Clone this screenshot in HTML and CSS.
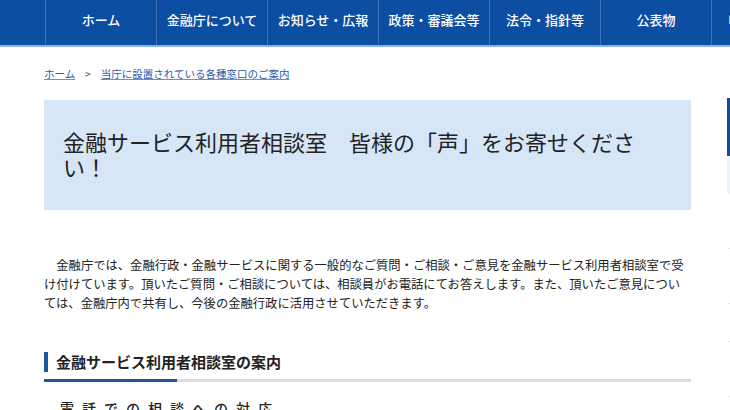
FILE: index.html
```html
<!DOCTYPE html>
<html lang="ja">
<head>
<meta charset="utf-8">
<title>金融サービス利用者相談室</title>
<link rel="stylesheet" href="styles.css">
</head>
<body>
<nav class="gnav">
  <ul class="gnav-list">
    <li class="gnav-item">ホーム</li>
    <li class="gnav-item">金融庁について</li>
    <li class="gnav-item">お知らせ・広報</li>
    <li class="gnav-item">政策・審議会等</li>
    <li class="gnav-item">法令・指針等</li>
    <li class="gnav-item">公表物</li>
    <li class="gnav-item">申請・届出等</li>
  </ul>
</nav>
<div class="page">
  <main class="main">
    <div class="breadcrumb">
      <a class="crumb" href="#">ホーム</a>
      <span class="sep">&gt;</span>
      <a class="crumb" href="#">当庁に設置されている各種窓口のご案内</a>
    </div>
    <div class="title-box">
      <h1 class="title">金融サービス利用者相談室　皆様の「声」をお寄せください！</h1>
    </div>
    <p class="lead">金融庁では、金融行政・金融サービスに関する一般的なご質問・ご相談・ご意見を金融サービス利用者相談室で受け付けています。頂いたご質問・ご相談については、相談員がお電話にてお答えします。また、頂いたご意見については、金融庁内で共有し、今後の金融行政に活用させていただきます。</p>
    <h2 class="section-title"><span class="section-text">金融サービス利用者相談室の案内</span></h2>
    <h3 class="sub-title">電話での相談への対応</h3>
  </main>
  <aside class="side">
    <div class="side-head"></div>
    <div class="side-sub"></div>
    <ul class="side-list">
      <li class="side-row"></li>
      <li class="side-row"></li>
      <li class="side-row short"></li>
      <li class="side-row"></li>
    </ul>
  </aside>
</div>
</body>
</html>
```

FILE: styles.css
```css
html, body {
  margin: 0;
  padding: 0;
}
body {
  width: 730px;
  height: 410px;
  overflow: hidden;
  background: #fff;
  color: #222;
  font-family: "Noto Sans CJK JP", "Noto Sans", sans-serif;
}
.gnav {
  background: #0b4ea2;
  height: 45px;
  border-bottom: 2px solid #8fb0dc;
}
.gnav-list {
  list-style: none;
  margin: 0 0 0 45px;
  padding: 0;
  display: flex;
  height: 45px;
}
.gnav-item {
  flex: 0 0 111px;
  box-sizing: border-box;
  border-left: 1px solid #3f72b8;
  color: #fff;
  font-size: 13px;
  font-weight: 500;
  display: flex;
  align-items: center;
  justify-content: center;
  padding-bottom: 7px;
  white-space: nowrap;
}
.page {
  display: flex;
  padding-left: 44px;
  gap: 36px;
}
.main {
  flex: 0 0 647px;
  width: 647px;
}
.breadcrumb {
  font-size: 10.5px;
  height: 52px;
  display: flex;
  align-items: center;
  gap: 10px;
  padding-bottom: 1px;
}
.crumb {
  color: #2b5ca8;
  text-decoration: underline;
  text-decoration-color: #6f8fc4;
}
.sep {
  color: #444;
  font-size: 10px;
}
.title-box {
  background: #d6e6f7;
  height: 110px;
  box-sizing: border-box;
  padding: 29px 40px 0 19px;
}
.title {
  margin: 0;
  font-size: 22px;
  font-weight: 400;
  line-height: 25px;
  color: #222;
}
.lead {
  margin: 46px 0 0;
  font-size: 12.3px;
  line-height: 19px;
  text-indent: 1em;
  color: #222;
}
.section-title {
  margin: 39px 0 0;
  font-size: 15px;
  font-weight: 700;
  line-height: 20px;
  padding-bottom: 7px;
  border-bottom: 3px solid #dcdcdc;
  position: relative;
}
.section-title::after {
  content: "";
  position: absolute;
  left: 0;
  bottom: -3px;
  width: 133px;
  height: 3px;
  background: #1f56a0;
}
.section-text {
  display: block;
  border-left: 4px solid #1f56a0;
  padding-left: 8px;
}
.sub-title {
  margin: 16px 0 0 16px;
  font-size: 14px;
  font-weight: 500;
  letter-spacing: 8px;
}
.side {
  flex: 0 0 200px;
  margin-top: 51px;
}
.side-head {
  height: 58px;
  background: #0b4ea2;
}
.side-sub {
  height: 38px;
  background: #eef3fa;
}
.side-list {
  list-style: none;
  margin: 0;
  padding: 0;
}
.side-row {
  height: 54px;
  border-bottom: 1px solid #e8e8e8;
}
.side-row.short {
  height: 37px;
}
```
